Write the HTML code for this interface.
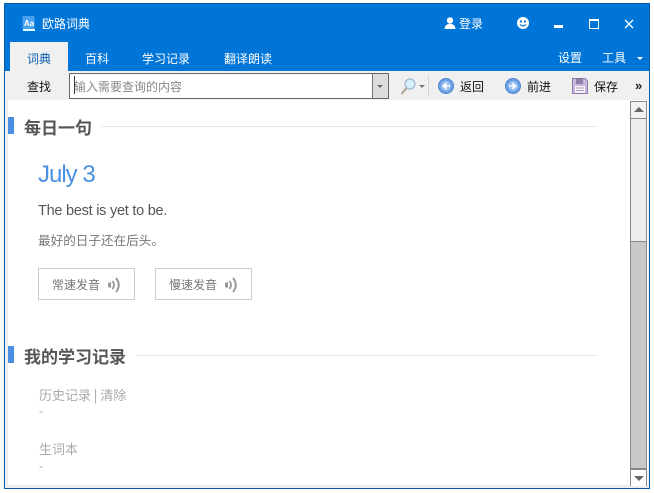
<!DOCTYPE html>
<html><head><meta charset="utf-8">
<style>
html,body{margin:0;padding:0;background:#fff}
body{width:654px;height:493px;position:relative;overflow:hidden;font-family:"Liberation Sans","Noto Sans CJK SC",sans-serif;font-size:12px}
.a{position:absolute;white-space:nowrap}
.t{position:absolute;white-space:nowrap;line-height:16px;font-family:"WenQuanYi Zen Hei","Noto Sans CJK SC",sans-serif;font-size:12px}
.w{color:#fff}.k{color:#111}
.h{position:absolute;white-space:nowrap;font-size:17px;font-weight:bold;color:#555;line-height:20px;font-family:"Noto Sans CJK SC",sans-serif}
.g{color:#777}
.l{color:#aaa}
svg{position:absolute;overflow:visible}
</style></head><body>
<div class="a" style="left:4px;top:3px;width:646px;height:486px;background:#0075d8;box-shadow:inset 0 0 0 1px #0b5ca8"></div>
<div class="a" style="left:5px;top:71px;width:644px;height:417px;background:#ededed"></div>
<div class="a" style="left:8px;top:100px;width:640px;height:385px;background:#fff"></div>
<svg style="left:22px;top:15px" width="14" height="17"><rect x="0.5" y="1" width="12" height="13" fill="#4aa0ee"/><rect x="1" y="14" width="12" height="2" fill="#dff"/><text x="2" y="11" font-size="8" font-weight="bold" fill="#fff" font-family="Liberation Sans">Aa</text></svg>
<div class="t w" style="left:42px;top:16px">欧路词典</div>
<svg style="left:444px;top:17px" width="12" height="12"><circle cx="6" cy="3.5" r="3.2" fill="#fff"/><path d="M0.5 12 C1 8 3 7 6 7 C9 7 11 8 11.5 12Z" fill="#fff"/></svg>
<div class="t w" style="left:459px;top:16px">登录</div>
<svg style="left:517px;top:17px" width="12" height="12"><circle cx="6" cy="6" r="6" fill="#fff"/><circle cx="4" cy="4.5" r="1.1" fill="#0075d8"/><circle cx="8" cy="4.5" r="1.1" fill="#0075d8"/><path d="M3 7.5 Q6 10.5 9 7.5" fill="none" stroke="#0075d8" stroke-width="1.2"/></svg>
<div class="a" style="left:554px;top:25px;width:9px;height:3px;background:#fff"></div>
<div class="a" style="left:589px;top:19px;width:8px;height:7px;border:1px solid #fff;border-top:2px solid #fff"></div>
<svg style="left:624px;top:19px" width="10" height="10"><path d="M1 1L9 9M9 1L1 9" stroke="#fff" stroke-width="1.4"/></svg>
<div class="a" style="left:10px;top:42px;width:58px;height:29px;background:#f0f0f0"></div>
<div class="t" style="left:27px;top:51px;color:#0a5fb0">词典</div>
<div class="t w" style="left:85px;top:51px">百科</div>
<div class="t w" style="left:142px;top:51px">学习记录</div>
<div class="t w" style="left:224px;top:51px">翻译朗读</div>
<div class="t w" style="left:558px;top:50px">设置</div>
<div class="t w" style="left:602px;top:50px">工具</div>
<svg style="left:637px;top:57px" width="7" height="4"><path d="M0 0H6L3 3Z" fill="#fff"/></svg>
<div class="a" style="left:5px;top:71px;width:644px;height:29px;background:#f0f0f0"></div>
<div class="t k" style="left:27px;top:79px">查找</div>
<div class="a" style="left:69px;top:73px;width:318px;height:24px;border:1px solid #666;background:#fff"></div>
<div class="a" style="left:74px;top:76px;width:1px;height:18px;background:#333"></div>
<div class="t" style="left:74px;top:79px;color:#888">输入需要查询的内容</div>
<div class="a" style="left:372px;top:74px;width:15px;height:24px;background:#dcdcdc;border-left:1px solid #777"></div>
<svg style="left:377px;top:85px" width="6" height="4"><path d="M0 0H6L3 3Z" fill="#666"/></svg>
<svg style="left:400px;top:78px" width="16" height="17"><circle cx="10" cy="6" r="5" fill="#d8f0fa" stroke="#8fb0c6"/><path d="M6.5 10L1.5 16" stroke="#b0a48f" stroke-width="2"/></svg>
<svg style="left:419px;top:85px" width="6" height="4"><path d="M0 0H6L3 3Z" fill="#777"/></svg>
<div class="a" style="left:428px;top:76px;width:1px;height:20px;background:#d4d4d4"></div>
<svg style="left:438px;top:78px" width="16" height="16"><circle cx="8" cy="8" r="7.5" fill="#6a9fe6" stroke="#4f86d0"/><circle cx="8" cy="8" r="5" fill="#9cc2f2"/><path d="M12 8H6M8 5.5L5 8L8 10.5Z" stroke="#fff" fill="#fff" stroke-width="1.2"/></svg>
<div class="t k" style="left:460px;top:79px">返回</div>
<svg style="left:505px;top:78px" width="16" height="16"><circle cx="8" cy="8" r="7.5" fill="#6a9fe6" stroke="#4f86d0"/><circle cx="8" cy="8" r="5" fill="#9cc2f2"/><path d="M4 8H10M8 5.5L11 8L8 10.5Z" stroke="#fff" fill="#fff" stroke-width="1.2"/></svg>
<div class="t k" style="left:527px;top:79px">前进</div>
<svg style="left:572px;top:78px" width="16" height="16"><path d="M.5.5H13L15.5 3V15.5H.5Z" fill="#c9b8dc" stroke="#8a78a8"/><rect x="4" y="1" width="7" height="5" fill="#8d7fa6"/><rect x="3" y="8" width="10" height="7" fill="#f4f2f8"/><path d="M4 10H12M4 12.5H12" stroke="#a9a0bc"/></svg>
<div class="t k" style="left:594px;top:79px">保存</div>
<div class="a" style="left:635px;top:79px;font-size:13px;font-weight:bold;line-height:14px;color:#222">»</div>
<div class="a" style="left:630px;top:101px;width:15px;height:16px;background:#f2f2f2;border:1px solid #888"></div>
<svg style="left:634px;top:107px" width="10" height="5"><path d="M0 5L5 0L10 5Z" fill="#666"/></svg>
<div class="a" style="left:630px;top:118px;width:15px;height:122px;background:#eee;border:1px solid #888;border-bottom:2px solid #888"></div>
<div class="a" style="left:630px;top:242px;width:17px;height:226px;background:#c8c8c8;border-left:0"></div>
<div class="a" style="left:630px;top:242px;width:1px;height:244px;background:#888"></div>
<div class="a" style="left:646px;top:242px;width:1px;height:244px;background:#888"></div>
<div class="a" style="left:630px;top:468px;width:17px;height:2px;background:#888"></div>
<div class="a" style="left:631px;top:470px;width:15px;height:16px;background:#fff"></div>
<svg style="left:634px;top:476px" width="10" height="5"><path d="M0 0L5 5L10 0Z" fill="#666"/></svg>
<div class="a" style="left:8px;top:117px;width:6px;height:17px;background:#4a90e2"></div>
<div class="h" style="left:24px;top:117px">每日一句</div>
<div class="a" style="left:101px;top:126px;width:497px;height:1px;background:#e8e8e8"></div>
<div class="a" style="left:38px;top:160px;font-size:24px;letter-spacing:-1px;line-height:30px;color:#4a90e2">July 3</div>
<div class="a" style="left:38px;top:202px;font-size:14.5px;line-height:18px;color:#555;letter-spacing:-.25px">The best is yet to be.</div>
<div class="t g" style="left:38px;top:232px;font-size:12.6px">最好的日子还在后头。</div>
<div class="a" style="left:38px;top:268px;width:95px;height:30px;border:1px solid #ccc"></div>
<div class="t g" style="left:52px;top:277px">常速发音</div>
<svg style="left:107px;top:277px" width="14" height="16"><path d="M1 6L4 5V11L1 10Z" fill="#999"/><path d="M5.5 4Q8.5 8 5.5 12" fill="none" stroke="#999" stroke-width="1.8"/><path d="M9 1Q14.5 8 9 15" fill="none" stroke="#999" stroke-width="2"/></svg>
<div class="a" style="left:155px;top:268px;width:95px;height:30px;border:1px solid #ccc"></div>
<div class="t g" style="left:169px;top:277px">慢速发音</div>
<svg style="left:224px;top:277px" width="14" height="16"><path d="M1 6L4 5V11L1 10Z" fill="#999"/><path d="M5.5 4Q8.5 8 5.5 12" fill="none" stroke="#999" stroke-width="1.8"/><path d="M9 1Q14.5 8 9 15" fill="none" stroke="#999" stroke-width="2"/></svg>
<div class="a" style="left:8px;top:346px;width:6px;height:17px;background:#4a90e2"></div>
<div class="h" style="left:24px;top:346px">我的学习记录</div>
<div class="a" style="left:136px;top:355px;width:462px;height:1px;background:#e8e8e8"></div>
<div class="t l" style="left:39px;top:387px;font-size:13px">历史记录 <span style="color:#999">|</span> 清除</div>
<div class="a" style="left:39px;top:405px;color:#aaa;font-size:12px;line-height:12px">-</div>
<div class="t l" style="left:39px;top:441px;font-size:13px">生词本</div>
<div class="a" style="left:39px;top:460px;color:#aaa;font-size:12px;line-height:12px">-</div>
</body></html>
